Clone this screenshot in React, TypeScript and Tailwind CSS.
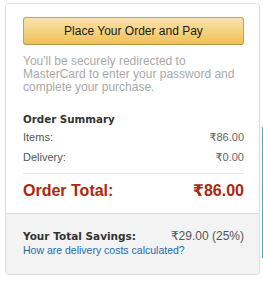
import React from 'react';

const rows = [
  { label: 'Items:', value: '₹86.00' },
  { label: 'Delivery:', value: '₹0.00' },
];

export default function App() {
  return (
    <div className="flex items-start bg-white min-h-[300px] pl-[5px] pt-[3px] font-['Liberation_Sans',Arial,'DejaVu_Sans',sans-serif]">
      <div className="w-[255px] border border-[#dddddd] rounded-[4px] overflow-hidden">
        {/* Order box */}
        <div className="pl-[17px] pr-[15px] pt-[13px] pb-[12px] bg-white">
          <button className="w-full h-[28px] rounded-[3px] border border-[#c9a449] border-b-[#b8953f] bg-gradient-to-b from-[#f8e3ad] to-[#efc14e] text-[12px] text-[#1a1a1a]">
            Place Your Order and Pay
          </button>
          <p className="mt-[10px] text-[12px] leading-[13px] text-[#a9a9a9]">
            You'll be securely redirected to MasterCard to enter your password and complete your purchase.
          </p>

          <h3 className="mt-[18px] text-[10.3px] leading-[14px] font-bold text-[#333333] font-['DejaVu_Sans',Verdana,sans-serif]">
            Order Summary
          </h3>
          <div className="mt-[1px]">
            {rows.map((row) => (
              <div key={row.label} className="flex justify-between text-[11px] leading-[20px] text-[#555555]">
                <span>{row.label}</span>
                <span className="text-[#666666]">{row.value}</span>
              </div>
            ))}
          </div>
          <div className="mt-[6px] border-t border-[#e7e7e7]" />
          <div className="mt-[7px] flex justify-between text-[16px] leading-[20px] font-bold text-[#a9290b]">
            <span>Order Total:</span>
            <span>₹86.00</span>
          </div>
        </div>

        {/* Savings */}
        <div className="pl-[17px] pr-[15px] pt-[15px] pb-[17px] bg-[#f3f3f3] border-t border-[#dddddd]">
          <div className="flex items-baseline justify-between leading-[15px]">
            <span className="text-[10.5px] font-bold text-[#333333] font-['DejaVu_Sans',Verdana,sans-serif]">
              Your Total Savings:
            </span>
            <span className="text-[12px] text-[#555555]">₹29.00 (25%)</span>
          </div>
          <a className="block text-[10.5px] leading-[13px] text-[#1f6aa8]">How are delivery costs calculated?</a>
        </div>
      </div>
      <div className="ml-[2px] mt-[124px] w-px h-[131px] bg-[#4ba3bf]" />
    </div>
  );
}
